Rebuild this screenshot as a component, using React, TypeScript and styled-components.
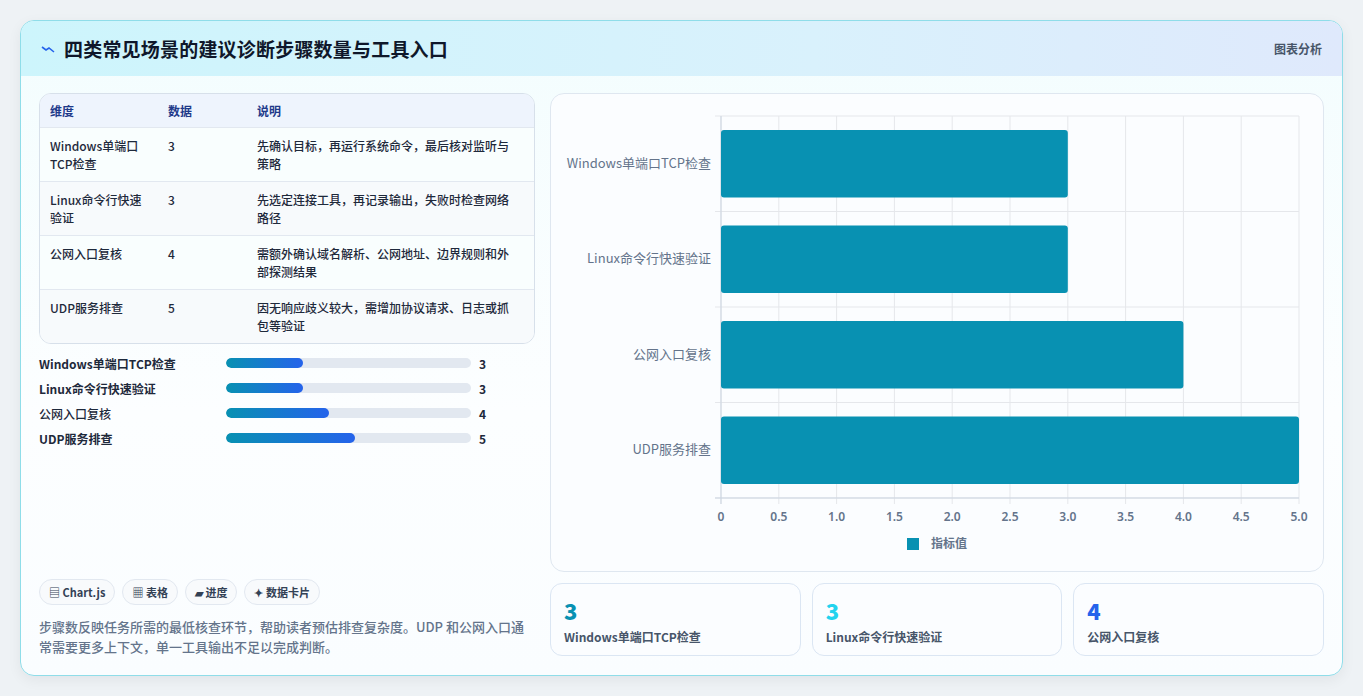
import React from "react";
import styled, { createGlobalStyle } from "styled-components";

const G = createGlobalStyle`
  html,body{margin:0;padding:0;background:#eef2f5;}
  body{font-family:"Noto Sans CJK SC","Noto Sans",sans-serif;}
`;
const Page = styled.div`padding:20px 20px 20px 20px;height:696px;box-sizing:border-box;`;
const Card = styled.div`
  height:656px;box-sizing:border-box;border:1px solid #8fdde9;border-radius:14px;overflow:hidden;
  background:linear-gradient(180deg,#f3fdfe 0%,#fcfeff 60%,#fafdff 100%);
  box-shadow:0 4px 14px rgba(15,23,42,.06);display:flex;flex-direction:column;`;
const Header = styled.div`
  height:55px;flex:none;display:flex;align-items:center;justify-content:space-between;padding:0 20px;
  background:linear-gradient(90deg,#cdf5fc 0%,#d9f1fc 60%,#dfe9fc 100%);`;
const Title = styled.h1`margin:0;font-size:19px;font-weight:700;color:#0f172a;display:flex;align-items:center;gap:9px;letter-spacing:.2px;`;
const Tag = styled.span`font-size:12px;color:#475569;font-weight:600;`;
const Body = styled.div`flex:1;display:grid;grid-template-columns:496px 774px;gap:15px;padding:17px 18px 18px 18px;`;
const Left = styled.div`display:flex;flex-direction:column;`;
const Table = styled.div`border:1px solid #d7e0ea;border-radius:12px;overflow:hidden;background:#fbfdff;`;
const Row = styled.div<{ head?: boolean; alt?: boolean }>`
  display:grid;grid-template-columns:118px 89px 1fr;padding:${p => p.head ? "8px 10px 7px" : "9px 10px 8px"};
  background:${p => p.head ? "#eef4fd" : p.alt ? "#f7fafc" : "#f9fefe"};
  border-top:${p => p.head ? "none" : "1px solid #e2e8f0"};
  font-size:12px;line-height:18px;color:${p => p.head ? "#1e3a8a" : "#1e293b"};font-weight:${p => p.head ? 600 : 500};
  min-height:${p => p.head ? "16px" : "35px"};
`;
const Cell = styled.div`padding-right:6px;`;
const Bars = styled.div`display:flex;flex-direction:column;gap:7px;margin-top:10px;`;
const BarRow = styled.div`display:grid;grid-template-columns:179px 245px 1fr;align-items:center;column-gap:8px;height:18px;font-size:12px;font-weight:700;color:#1e293b;`;
const Track = styled.div`height:10px;border-radius:5px;background:#e2e8f0;overflow:hidden;`;
const Fill = styled.div`height:100%;border-radius:5px;background:linear-gradient(90deg,#0891b2,#2563eb);`;
const Spacer = styled.div`flex:1;`;
const Chips = styled.div`display:flex;gap:7px;margin-bottom:12px;`;
const Chip = styled.span`border:1px solid #e2e8f0;background:#f8fafc;border-radius:14px;padding:4px 9px;font-size:11px;font-weight:600;color:#334155;`;
const Note = styled.p`margin:0;font-size:13px;line-height:20px;color:#64748b;font-weight:500;`;
const Right = styled.div`display:flex;flex-direction:column;gap:11px;`;
const ChartBox = styled.div`height:479px;box-sizing:border-box;border:1px solid #dfe7f0;border-radius:14px;background:#fbfdff;`;
const Stats = styled.div`display:grid;grid-template-columns:repeat(3,1fr);gap:11px;`;
const Stat = styled.div`height:73px;box-sizing:border-box;border:1px solid #dbe6f3;border-radius:12px;background:#fbfdff;padding:12px 13px;`;
const Num = styled.div<{ c: string }>`font-size:22px;font-weight:800;color:${p => p.c};line-height:28px;`;
const Lbl = styled.div`font-size:12px;font-weight:700;color:#475569;margin-top:4px;`;

const data = [
  ["Windows单端口TCP检查", "Windows单端口\nTCP检查", 3, "先确认目标，再运行系统命令，最后核对监听与策略"],
  ["Linux命令行快速验证", "Linux命令行快速\n验证", 3, "先选定连接工具，再记录输出，失败时检查网络路径"],
  ["公网入口复核", "公网入口复核", 4, "需额外确认域名解析、公网地址、边界规则和外部探测结果"],
  ["UDP服务排查", "UDP服务排查", 5, "因无响应歧义较大，需增加协议请求、日志或抓包等验证"],
] as const;

function Chart() {
  const x0 = 170, x1 = 748, y0 = 22, y1 = 404;
  const bw = (y1 - y0) / 4;
  const sx = (v: number) => x0 + (v / 5) * (x1 - x0);
  return (
    <svg width="772" height="477" style={{ display: "block" }}>
      {Array.from({ length: 11 }, (_, i) => (
        <line key={i} x1={sx(i * 0.5)} x2={sx(i * 0.5)} y1={y0} y2={y1 + (i === 0 ? 6 : 6)} stroke="#e5e7eb" />
      ))}
      {Array.from({ length: 5 }, (_, i) => (
        <line key={i} x1={x0 - 6} x2={x1} y1={y0 + i * bw} y2={y0 + i * bw} stroke="#e5e7eb" />
      ))}
      <line x1={x0 - 6} x2={x1} y1={y1} y2={y1} stroke="#cbd5e1" />
      <line x1={x0} x2={x0} y1={y0} y2={y1 + 6} stroke="#cbd5e1" />
      {data.map((d, i) => (
        <g key={i}>
          <rect x={x0} y={y0 + i * bw + 14} width={sx(d[2]) - x0} height={bw - 28} rx={3} fill="#0891b2" />
          <text x={x0 - 10} y={y0 + i * bw + bw / 2 + 4} textAnchor="end" fontSize="13" fill="#64748b" fontFamily="Noto Sans CJK SC, sans-serif">{d[0]}</text>
        </g>
      ))}
      {Array.from({ length: 11 }, (_, i) => (
        <text key={i} x={sx(i * 0.5)} y={427} textAnchor="middle" fontSize="12" fontWeight="600" fill="#64748b" fontFamily="Noto Sans, sans-serif">{i === 0 ? "0" : (i * 0.5).toFixed(1)}</text>
      ))}
      <rect x={356} y={444} width={12} height={12} fill="#0891b2" />
      <text x={380} y={454} fontSize="12" fontWeight="600" fill="#64748b" fontFamily="Noto Sans CJK SC, sans-serif">指标值</text>
    </svg>
  );
}

export default function App() {
  return (
    <Page>
      <G />
      <Card>
        <Header>
          <Title><svg width="14" height="10" viewBox="0 0 14 10"><path d="M1 3 L5 6 L8 4 L13 8" stroke="#2563eb" strokeWidth="1.6" fill="none" /></svg>四类常见场景的建议诊断步骤数量与工具入口</Title>
          <Tag>图表分析</Tag>
        </Header>
        <Body>
          <Left>
            <Table>
              <Row head><Cell>维度</Cell><Cell>数据</Cell><Cell>说明</Cell></Row>
              {data.map((d, i) => (
                <Row key={i} alt={i % 2 === 1}>
                  <Cell style={{ whiteSpace: "pre-line" }}>{d[1]}</Cell><Cell>{d[2]}</Cell><Cell>{d[3]}</Cell>
                </Row>
              ))}
            </Table>
            <Bars>
              {data.map((d, i) => (
                <BarRow key={i}>
                  <span style={{ fontWeight: i === 2 ? 500 : 700 }}>{d[0]}</span>
                  <Track><Fill style={{ width: `${(d[2] / 9.5) * 100}%` }} /></Track>
                  <span>{d[2]}</span>
                </BarRow>
              ))}
            </Bars>
            <Spacer />
            <Chips>
              <Chip>▤ Chart.js</Chip><Chip>▦ 表格</Chip><Chip>▰ 进度</Chip><Chip>✦ 数据卡片</Chip>
            </Chips>
            <Note>步骤数反映任务所需的最低核查环节，帮助读者预估排查复杂度。UDP 和公网入口通常需要更多上下文，单一工具输出不足以完成判断。</Note>
          </Left>
          <Right>
            <ChartBox><Chart /></ChartBox>
            <Stats>
              <Stat><Num c="#0891b2">3</Num><Lbl>Windows单端口TCP检查</Lbl></Stat>
              <Stat><Num c="#22d3ee">3</Num><Lbl>Linux命令行快速验证</Lbl></Stat>
              <Stat><Num c="#2563eb">4</Num><Lbl>公网入口复核</Lbl></Stat>
            </Stats>
          </Right>
        </Body>
      </Card>
    </Page>
  );
}
